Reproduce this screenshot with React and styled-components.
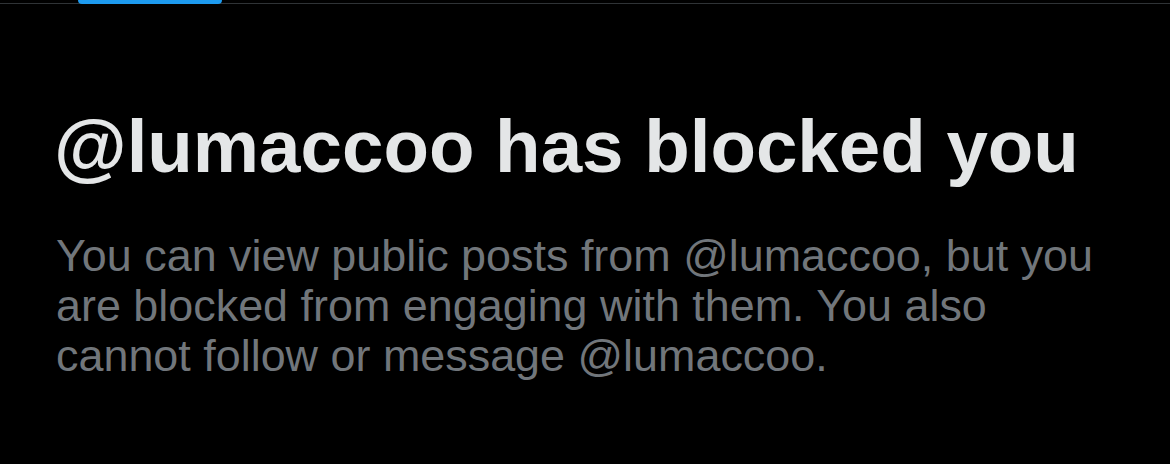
import React from 'react';
import styled, { createGlobalStyle } from 'styled-components';

const GlobalStyle = createGlobalStyle`
  html, body {
    margin: 0;
    padding: 0;
    background: #000;
  }
  body {
    font-family: 'Liberation Sans', Arial, sans-serif;
    -webkit-font-smoothing: antialiased;
  }
`;

const Page = styled.div`
  width: 1170px;
  height: 464px;
  background: #000;
  overflow: hidden;
  display: flex;
  flex-direction: column;
`;

const TabStrip = styled.div`
  display: flex;
  align-items: flex-end;
  height: 3px;
  padding-left: 78px;
  border-bottom: 1px solid #2f3336;
`;

const TabIndicator = styled.div`
  width: 144px;
  height: 4px;
  margin-bottom: -1px;
  background: #1d9bf0;
  border-radius: 0 0 4px 4px;
`;

const Content = styled.div`
  display: flex;
  flex-direction: column;
  padding: 106px 56px 0 54px;
`;

const Title = styled.h1`
  margin: 0;
  font-size: 74.5px;
  line-height: 74px;
  font-weight: 700;
  color: #e4e6e7;
  white-space: nowrap;
`;

const Description = styled.p`
  margin: 47px 0 0 2px;
  max-width: 1070px;
  font-size: 44.9px;
  line-height: 50px;
  font-weight: 400;
  color: #71767b;
`;

export default function App() {
  const handle = '@lumaccoo';
  return (
    <>
      <GlobalStyle />
      <Page>
        <TabStrip>
          <TabIndicator />
        </TabStrip>
        <Content>
          <Title>{handle} has blocked you</Title>
          <Description>
            You can view public posts from {handle}, but you
            <br />
            are blocked from engaging with them. You also
            <br />
            cannot follow or message {handle}.
          </Description>
        </Content>
      </Page>
    </>
  );
}
